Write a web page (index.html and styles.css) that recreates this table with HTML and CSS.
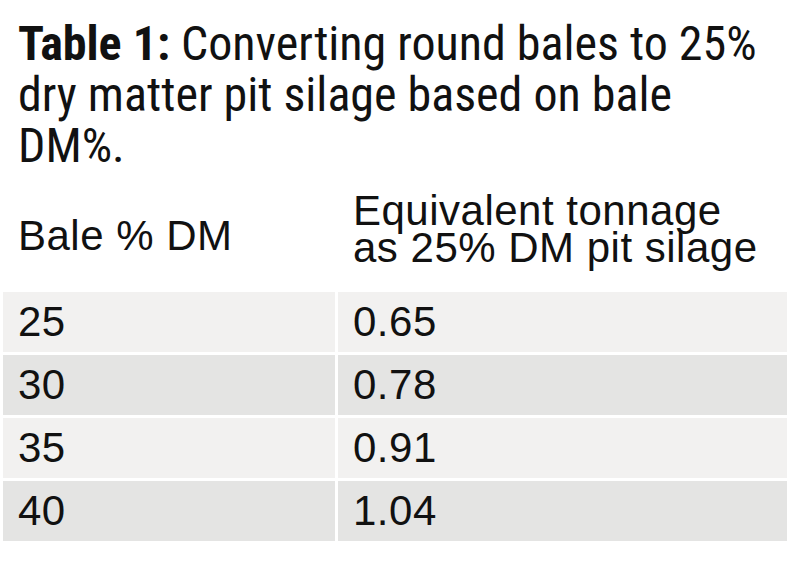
FILE: index.html
```html
<!DOCTYPE html>
<html lang="en">
<head>
<meta charset="utf-8">
<title>Table 1</title>
<link rel="stylesheet" href="styles.css">
</head>
<body>
<div class="figure">
  <h1 class="caption"><span class="label">Table 1:</span> Converting round bales to 25% dry matter pit silage based on bale DM%.</h1>
  <table class="data">
    <thead>
      <tr>
        <th class="col-a">Bale % DM</th>
        <th class="col-b">Equivalent tonnage<br>as 25% DM pit silage</th>
      </tr>
    </thead>
    <tbody>
      <tr class="odd"><td>25</td><td>0.65</td></tr>
      <tr class="even"><td>30</td><td>0.78</td></tr>
      <tr class="odd"><td>35</td><td>0.91</td></tr>
      <tr class="even"><td>40</td><td>1.04</td></tr>
    </tbody>
  </table>
</div>
</body>
</html>
```

FILE: styles.css
```css
html, body {
  margin: 0;
  padding: 0;
  background: #ffffff;
}

.figure {
  width: 790px;
  color: #111111;
}

.caption {
  margin: 0;
  padding: 18px 20px 0 18px;
  font-family: Roboto, "DejaVu Sans", sans-serif;
  font-stretch: 75%;
  font-weight: normal;
  font-size: 48px;
  line-height: 51px;
  color: #111111;
}

.caption .label {
  font-weight: bold;
}

.data {
  border-collapse: separate;
  border-spacing: 3px;
  margin: 0;
  width: 790px;
  font-family: "Liberation Sans", Arial, sans-serif;
  font-size: 42px;
  letter-spacing: 0.5px;
  color: #111111;
}

.data th {
  font-weight: normal;
  text-align: left;
  vertical-align: top;
  padding: 18px 0 23px 15px;
  line-height: 37px;
}

.data th.col-a {
  width: 317px;
  padding-top: 43px;
}

.data td {
  height: 60px;
  padding: 0 0 0 15px;
  line-height: 60px;
}

.data tr.odd td {
  background: #f2f1f0;
}

.data tr.even td {
  background: #e4e4e3;
}
```
